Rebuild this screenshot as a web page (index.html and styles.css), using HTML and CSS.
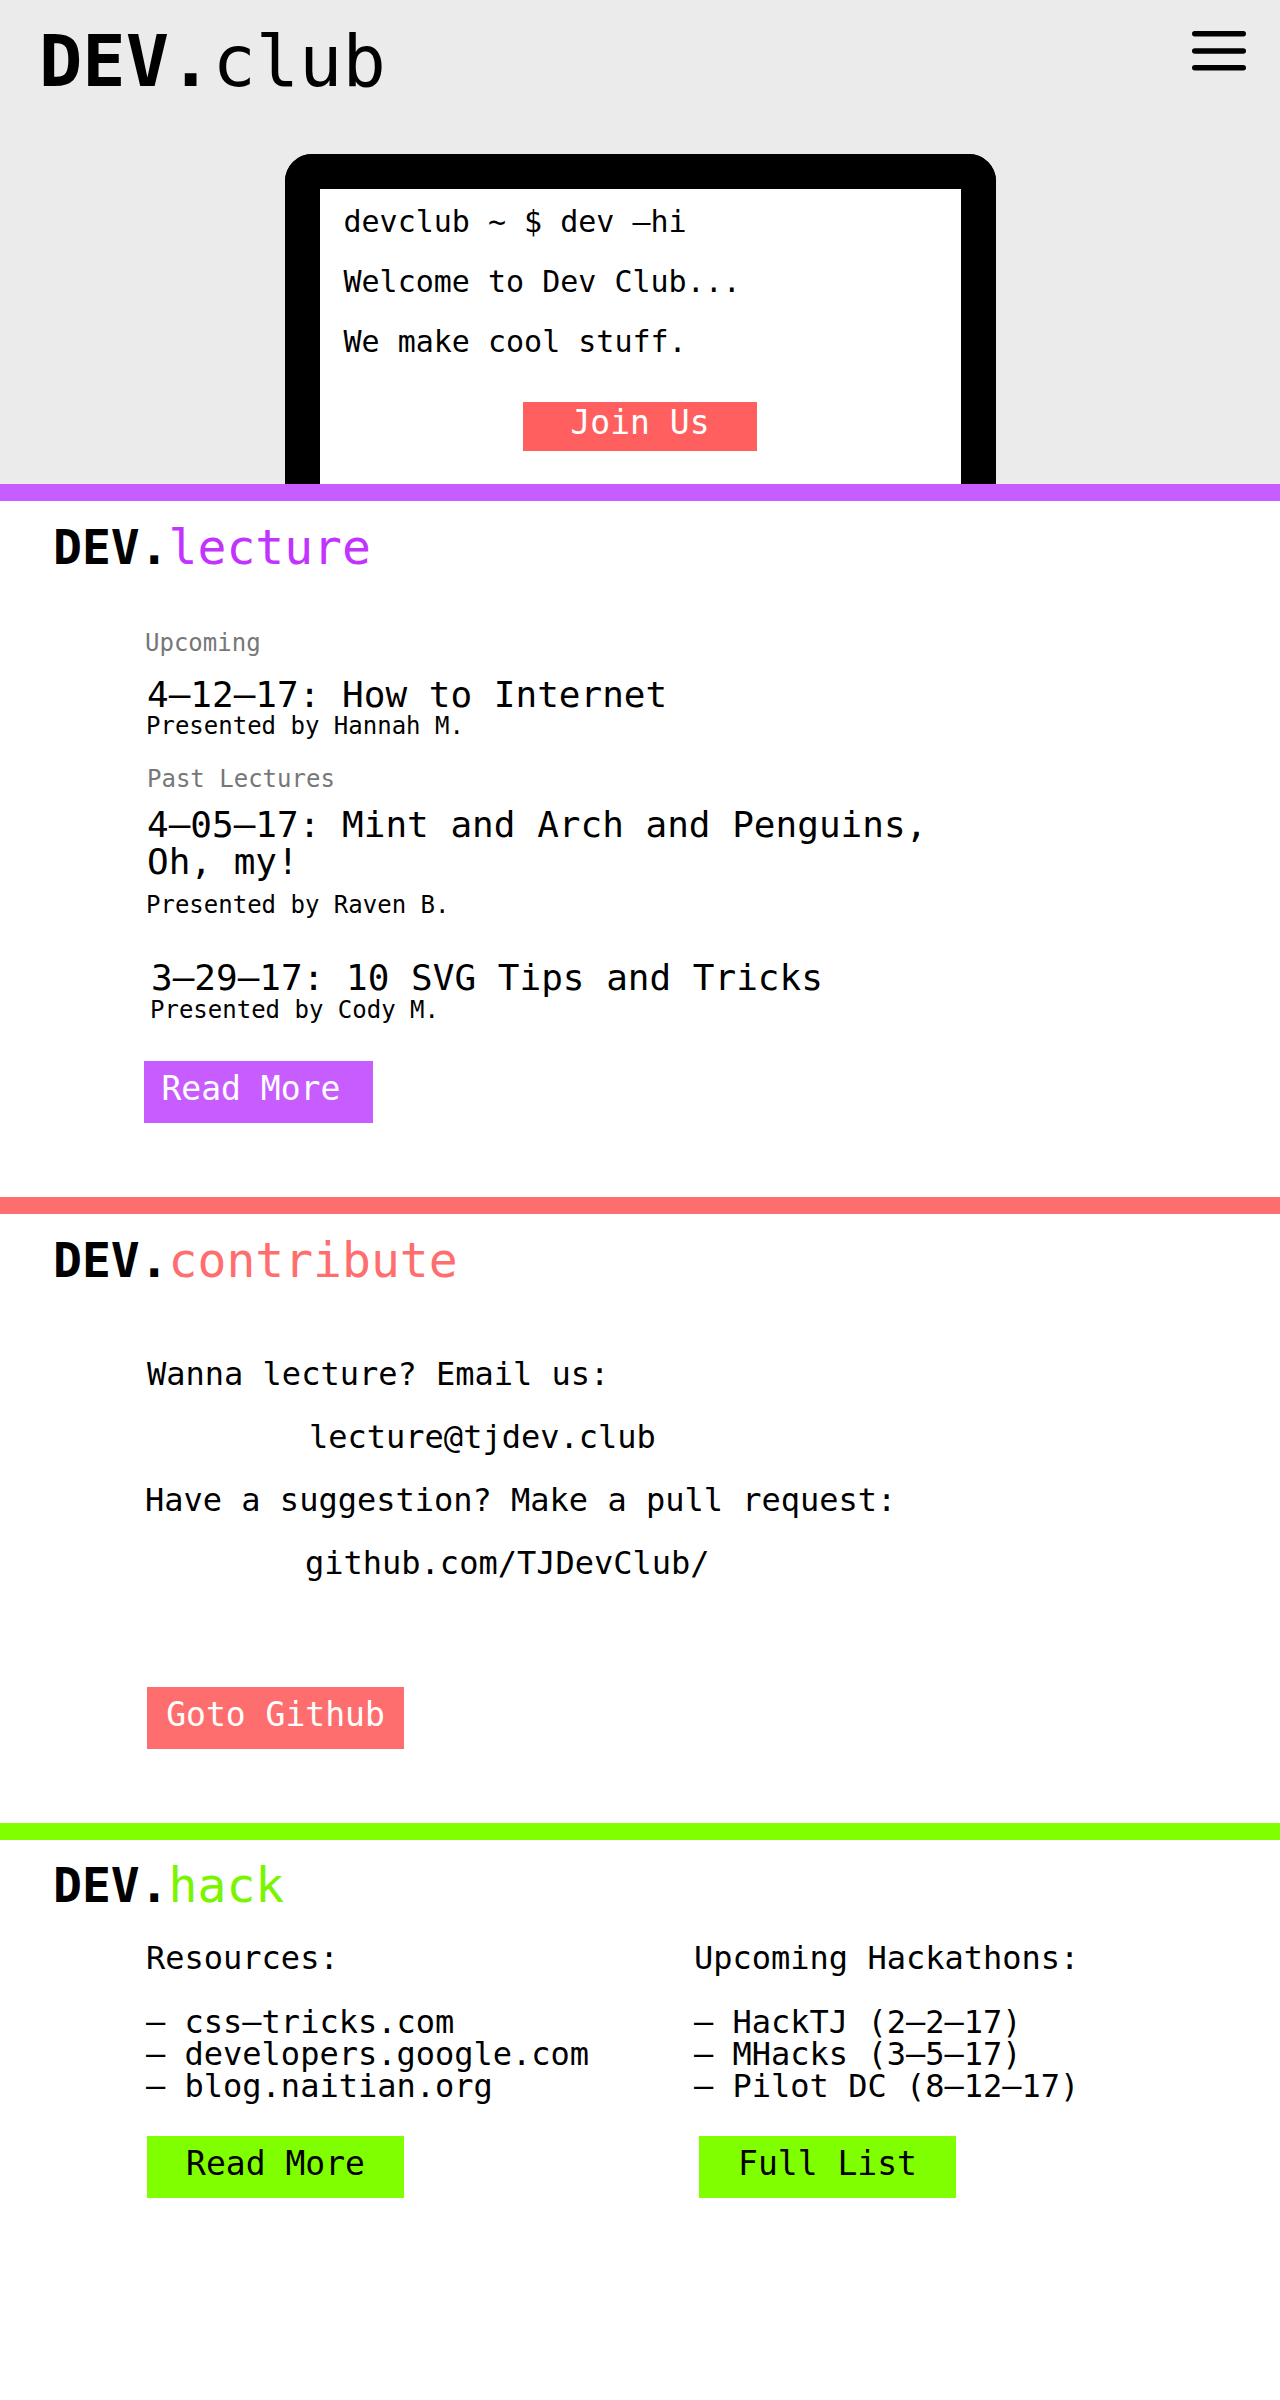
FILE: index.html
```html
<!DOCTYPE html>
<html lang="en">
<head>
<meta charset="utf-8">
<title>DEV.club</title>
<link rel="stylesheet" href="styles.css">
</head>
<body>
<header class="hero">
  <div class="topbar">
    <h1 class="logo"><b>DEV.</b>club</h1>
    <svg class="menu" viewBox="0 0 54 40" aria-label="Menu">
      <line x1="2.75" y1="2.8" x2="51.25" y2="2.8"/>
      <line x1="2.75" y1="20" x2="51.25" y2="20"/>
      <line x1="2.75" y1="36.7" x2="51.25" y2="36.7"/>
    </svg>
  </div>
  <div class="terminal">
    <div class="screen">
      <p class="term-line">devclub ~ $ dev –hi</p>
      <p class="term-line">Welcome to Dev Club...</p>
      <p class="term-line">We make cool stuff.</p>
      <a class="btn btn-join" href="#">Join Us</a>
    </div>
  </div>
</header>

<section class="sec sec-lecture">
  <h2 class="sec-title"><b>DEV.</b><span>lecture</span></h2>
  <div class="lectures">
    <p class="label label-up">Upcoming</p>
    <p class="talk talk-1">4–12–17: How to Internet</p>
    <p class="presenter presenter-1">Presented by Hannah M.</p>
    <p class="label label-past">Past Lectures</p>
    <p class="talk talk-2">4–05–17: Mint and Arch and Penguins, Oh, my!</p>
    <p class="presenter presenter-2">Presented by Raven B.</p>
    <p class="talk talk-3">3–29–17: 10 SVG Tips and Tricks</p>
    <p class="presenter presenter-3">Presented by Cody M.</p>
    <a class="btn btn-lecture" href="#">Read More</a>
  </div>
</section>

<section class="sec sec-contribute">
  <h2 class="sec-title"><b>DEV.</b><span>contribute</span></h2>
  <div class="contrib">
    <p class="c-line c-ask">Wanna lecture? Email us:</p>
    <p class="c-line c-mail">lecture@tjdev.club</p>
    <p class="c-line c-ask2">Have a suggestion? Make a pull request:</p>
    <p class="c-line c-gh">github.com/TJDevClub/</p>
  </div>
  <a class="btn btn-github" href="#">Goto Github</a>
</section>

<section class="sec sec-hack">
  <h2 class="sec-title"><b>DEV.</b><span>hack</span></h2>
  <div class="hack-cols">
    <div class="hack-col">
      <p class="hack-head">Resources:</p>
      <ul class="hack-list">
        <li>– css–tricks.com</li>
        <li>– developers.google.com</li>
        <li>– blog.naitian.org</li>
      </ul>
      <a class="btn btn-hack btn-left" href="#">Read More</a>
    </div>
    <div class="hack-col">
      <p class="hack-head">Upcoming Hackathons:</p>
      <ul class="hack-list">
        <li>– HackTJ (2–2–17)</li>
        <li>– MHacks (3–5–17)</li>
        <li>– Pilot DC (8–12–17)</li>
      </ul>
      <a class="btn btn-hack btn-right" href="#">Full List</a>
    </div>
  </div>
</section>
</body>
</html>
```

FILE: styles.css
```css
* {
  box-sizing: border-box;
}

html,
body {
  margin: 0;
  padding: 0;
}

body {
  font-family: "DejaVu Sans Mono", "Liberation Mono", monospace;
  color: #000;
  background: #fff;
}

p {
  margin: 0;
}

.btn {
  display: block;
  text-decoration: none;
  font-size: 33px;
  line-height: 38px;
}

/* ---------- hero ---------- */
.hero {
  background: #ebebeb;
  height: 484px;
  padding-top: 19px;
  overflow: hidden;
}

.topbar {
  display: flex;
  justify-content: space-between;
  align-items: flex-start;
  padding: 0 34px 0 39px;
}

.logo {
  margin: 0;
  font-size: 72px;
  line-height: 84px;
  font-weight: normal;
}

.logo b {
  font-weight: bold;
}

.menu {
  display: block;
  width: 54px;
  height: 40px;
  margin-top: 11.5px;
  stroke: #000;
  stroke-width: 5.5;
  stroke-linecap: round;
}

.terminal {
  width: 711px;
  height: 330px;
  margin: 51px auto 0;
  border: 35px solid #000;
  border-bottom: 0;
  border-radius: 27px 27px 0 0;
  background: #fff;
}

.screen {
  padding: 2.6px 22px 0;
}

.term-line {
  font-size: 30px;
  line-height: 60px;
  padding-left: 2px;
}

.btn-join {
  width: 234px;
  height: 49px;
  margin: 30.4px auto 0;
  padding-top: 2.4px;
  background: #ff5f5f;
  color: #fff;
  text-align: center;
}

/* ---------- sections ---------- */
.sec {
  border-top: 17px solid;
  padding: 17.5px 0 74px;
}

.sec-title {
  margin: 0 0 0 53px;
  font-size: 48px;
  line-height: 56px;
  font-weight: normal;
}

.sec-title b {
  font-weight: bold;
  color: #000;
}

.sec-lecture {
  border-color: #c85dff;
}

.sec-lecture .sec-title span {
  color: #c233ff;
}

.sec-contribute {
  border-color: #ff6e6e;
}

.sec-contribute .sec-title span {
  color: #ff6e6e;
}

.sec-hack {
  border-color: #80ff00;
}

.sec-hack .sec-title span {
  color: #7af500;
}

/* ---------- lecture ---------- */
.lectures {
  margin: 54.2px 0 0 145px;
  max-width: 820px;
}

.label {
  font-size: 24px;
  line-height: 28px;
  color: #777;
}

.label-past {
  margin-left: 2px;
}

.talk {
  font-size: 36px;
  line-height: 37px;
  margin-left: 2px;
}

.presenter {
  font-size: 24px;
  line-height: 26px;
  margin-left: 1px;
}

.talk-1 {
  margin-top: 19.3px;
}

.label-past {
  margin-top: 26px;
}

.talk-2 {
  margin-top: 13.3px;
}

.presenter-2 {
  margin-top: 11.7px;
}

.talk-3 {
  margin: 41.3px 0 0 6px;
}

.presenter-3 {
  margin: 0.7px 0 0 5px;
}

.btn-lecture {
  width: 229px;
  height: 62px;
  margin: 38.3px 0 0 -1.5px;
  padding: 9px 0 0 18px;
  background: #c85dff;
  color: #fff;
}

/* ---------- contribute ---------- */
.contrib {
  margin: 54.9px 0 0 145px;
}

.c-line {
  font-size: 32px;
  line-height: 63px;
}

.c-ask {
  padding-left: 2px;
}

.c-mail {
  padding-left: 164px;
}

.c-gh {
  padding-left: 160px;
}

.btn-github {
  width: 257px;
  height: 62px;
  margin: 92px 0 0 147px;
  padding-top: 9px;
  background: #ff6e6e;
  color: #fff;
  text-align: center;
}

/* ---------- hack ---------- */
.hack-cols {
  display: grid;
  grid-template-columns: 548px 548px;
  margin: 28.4px 0 0 146px;
}

.hack-head {
  font-size: 32px;
  line-height: 32px;
  margin-bottom: 32px;
}

.hack-list {
  list-style: none;
  margin: 0;
  padding: 0;
  font-size: 32px;
  line-height: 32px;
}

.btn-hack {
  width: 257px;
  height: 62px;
  margin-top: 34px;
  padding-top: 9px;
  background: #80ff00;
  color: #000;
  text-align: center;
}

.btn-left {
  margin-left: 1px;
}

.btn-right {
  margin-left: 5px;
}
```
